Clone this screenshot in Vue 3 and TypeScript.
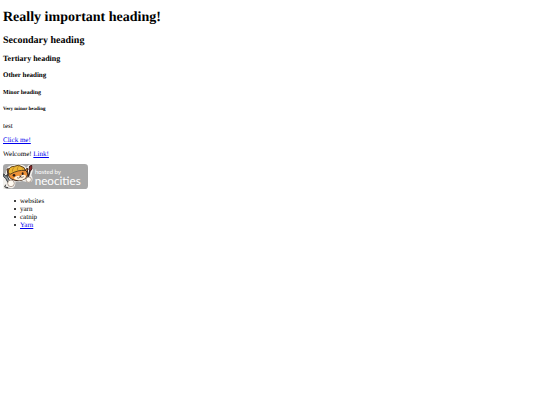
<script setup lang="ts">
interface Item {
  label: string
  href?: string
}

const items: Item[] = [
  { label: 'websites' },
  { label: 'yarn' },
  { label: 'catnip' },
  { label: 'Yarn', href: '#yarn' },
]
</script>

<template>
  <main class="page">
    <h1>Really important heading!</h1>
    <h2>Secondary heading</h2>
    <h3>Tertiary heading</h3>
    <h4>Other heading</h4>
    <h5>Minor heading</h5>
    <h6>Very minor heading</h6>
    <p>test</p>
    <p><a href="#click">Click me!</a></p>
    <p>Welcome! <a href="#link">Link!</a></p>
    <svg class="badge" viewBox="0 0 255 75" role="img" aria-label="hosted by neocities">
      <rect width="255" height="75" rx="10" fill="#a8a8a8" />
      <!-- sticker edge behind the cat and its tools -->
      <path d="M9 22 Q10 5 30 3 Q45-2 58 3 Q66 4 70 12 L76 4 Q85-1 90 5 V18 L85 34 Q91 42 87 52 Q80 58 69 53 L58 51 Q47 54 37 52 Q39 65 31 71 Q23 75 16 70 L7 74 H0 V27 L8 30Z" fill="#f2f0ec" />
      <!-- ears and face -->
      <path d="M15 32 L12 15 L28 14Z M63 22 L73 12 L74 33Z" fill="#e8872f" stroke="#3d291d" stroke-width="3" />
      <ellipse cx="45" cy="31" rx="29" ry="19" fill="#ee9238" stroke="#3d291d" stroke-width="3" />
      <path d="M32 43 Q40 33 50 36 Q60 29 69 35 Q68 46 52 49 Q38 50 32 43Z" fill="#fff3df" />
      <!-- hat -->
      <path d="M16 21 Q19 7 34 7 Q46 0 57 8 Q66 9 66 20 Q47 16 21 31 Q14 28 16 21Z" fill="#edb735" stroke="#5e431f" stroke-width="3" />
      <path d="M34 9 Q28 14 28 23 M48 5 Q43 10 43 18 M56 9 Q61 12 60 18" fill="none" stroke="#a87420" stroke-width="2" />
      <!-- eyes, nose and mouth -->
      <ellipse cx="33" cy="34" rx="4" ry="4" fill="#2c1d17" />
      <ellipse cx="59" cy="29" rx="3" ry="4" fill="#2c1d17" />
      <path d="M48 36 L56 34 L53 40Z" fill="#4b2925" />
      <path d="M52 39 Q47 45 42 41 M52 39 Q57 42 62 38" fill="none" stroke="#583f35" stroke-width="2" />
      <!-- wrench and brush -->
      <path d="M2 29 V38 L8 43 L19 63 L24 59 L14 39 V30 L9 37Z" fill="#929ba0" stroke="#34383b" stroke-width="3" />
      <path d="M82 17 L73 47" stroke="#33231f" stroke-width="5" />
      <path d="M78 17 L80 6 L87 4 L87 15 L82 21Z" fill="#8f2528" stroke="#40201e" stroke-width="3" />
      <!-- paws -->
      <circle cx="24" cy="58" r="10" fill="#fffaf0" stroke="#8a7468" stroke-width="2" />
      <circle cx="77" cy="47" r="8" fill="#fffaf0" stroke="#8a7468" stroke-width="2" />
      <path d="M8 62 L5 69 L15 71" fill="none" stroke="#333" stroke-width="3" />
      <text class="hosted" x="96" y="29">hosted by</text>
      <text class="brand" x="95" y="62">neocities</text>
    </svg>
    <ul>
      <li v-for="item in items" :key="item.label">
        <a v-if="item.href" :href="item.href">{{ item.label }}</a>
        <template v-else>{{ item.label }}</template>
      </li>
    </ul>
  </main>
</template>

<style>
body {
  margin: 0;
  background: #fff;
}
</style>

<style scoped>
.page {
  padding: 10px 3px;
  color: #000;
  font-family: "Liberation Serif", "Times New Roman", serif;
  font-size: 7px;
  line-height: 8px;
  text-rendering: geometricPrecision;
}

h1, h2, h3, h4, h5, h6, p, ul {
  margin: 0;
}

h1 {
  margin-bottom: 9px;
  font-size: 14px;
  line-height: 16px;
}

h2 {
  margin-bottom: 7px;
  font-size: 10px;
  line-height: 12px;
}

h3 {
  margin-bottom: 7px;
  font-size: 8px;
  line-height: 10px;
}

h4 {
  margin-bottom: 10px;
  font-size: 7px;
}

h5 {
  margin-bottom: 9px;
  font-size: 6px;
}

h6 {
  margin-bottom: 8px;
  font-size: 5px;
}

p {
  margin-bottom: 6px;
}

a {
  color: #00e;
  text-decoration: underline;
}

.badge {
  display: block;
  width: 85px;
  height: 25px;
  margin-bottom: 8px;
}

.badge text {
  fill: #fff;
  font-family: Lato, "Open Sans", sans-serif;
}

.hosted {
  font-size: 18px;
}

.brand {
  font-size: 35px;
}

ul {
  padding: 0;
  list-style: none;
}

li {
  display: flex;
  align-items: center;
  gap: 4px;
  padding-left: 11px;
}

li::before {
  width: 2px;
  height: 2px;
  border-radius: 50%;
  background: #000;
  content: "";
}
</style>
